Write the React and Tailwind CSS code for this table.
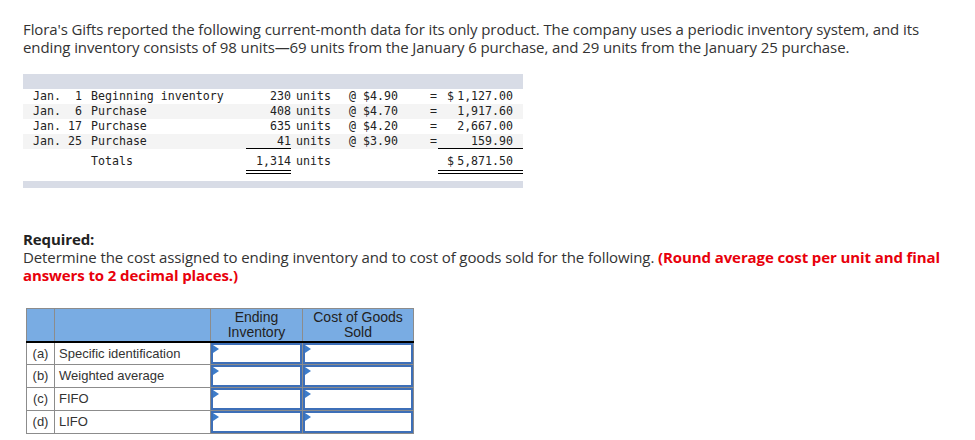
import React from 'react';

const rows = [
  { date: 'Jan.  1', desc: 'Beginning inventory', units: '230', price: '@ $4.90', amount: '1,127.00', dollar: true },
  { date: 'Jan.  6', desc: 'Purchase', units: '408', price: '@ $4.70', amount: '1,917.60' },
  { date: 'Jan. 17', desc: 'Purchase', units: '635', price: '@ $4.20', amount: '2,667.00' },
  { date: 'Jan. 25', desc: 'Purchase', units: '41', price: '@ $3.90', amount: '159.90' },
];

const methods = [
  { key: '(a)', label: 'Specific identification' },
  { key: '(b)', label: 'Weighted average' },
  { key: '(c)', label: 'FIFO' },
  { key: '(d)', label: 'LIFO' },
];

function DataRow({ row, index, last }) {
  const shade = index % 2 === 1 ? 'bg-[#f4f4f4]' : 'bg-white';
  return (
    <div className={`flex h-[15px] leading-[15px] ${shade}`}>
      <div className="w-[10px]" />
      <div className="w-[58px] whitespace-pre">{row.date}</div>
      <div className="w-[155px] whitespace-pre">{row.desc}</div>
      <div className={`w-[45px] text-right ${last ? 'border-b border-black' : ''}`}>{row.units}</div>
      <div className="w-[5px]" />
      <div className="w-[53px]">units</div>
      <div className="w-[81px] whitespace-pre">{row.price}</div>
      <div className="w-[8px]">=</div>
      <div className={`w-[85px] flex pr-[10px] ${last ? 'border-b border-black' : ''}`}>
        {row.dollar && <span className="ml-[9px]">$</span>}
        <span className="ml-auto">{row.amount}</span>
      </div>
    </div>
  );
}

function InputCell() {
  return (
    <td className="border border-[#8c8c8c] p-0 h-[23px]">
      <div className="relative h-full border-2 border-[#3d6fb8] bg-white">
        <span className="absolute left-0 top-0 w-0 h-0 border-y-[4px] border-y-transparent border-l-[6px] border-l-[#3d7cc9]" />
      </div>
    </td>
  );
}

export default function App() {
  return (
    <div className="w-[975px] h-[440px] overflow-hidden bg-white pl-[23px] pt-[20px] text-[#333] font-['Open_Sans',sans-serif]">
      <p className="text-[15px] leading-[18px] w-[935px] tracking-[-0.1px]">
        Flora's Gifts reported the following current-month data for its only product. The company uses a periodic inventory system, and its ending inventory consists of 98 units—69 units from the January 6 purchase, and 29 units from the January 25 purchase.
      </p>

      <div className="mt-[18px] w-[500px] font-['DejaVu_Sans_Mono',monospace] text-[11.6px] text-[#222]">
        <div className="h-[15px] bg-[#d8dce6]" />
        {rows.map((row, i) => (
          <DataRow key={row.date} row={row} index={i} last={i === rows.length - 1} />
        ))}
        <div className="flex h-[21px] leading-[15px] pt-[5px]">
          <div className="w-[68px]" />
          <div className="w-[155px]">Totals</div>
          <div className="w-[45px] text-right">1,314</div>
          <div className="w-[5px]" />
          <div className="w-[53px]">units</div>
          <div className="w-[89px]" />
          <div className="w-[85px] flex pr-[10px]">
            <span className="ml-[9px]">$</span>
            <span className="ml-auto">5,871.50</span>
          </div>
        </div>
        <div className="flex h-[4px]">
          <div className="w-[223px]" />
          <div className="w-[45px] border-t-4 border-double border-black" />
          <div className="w-[147px]" />
          <div className="w-[85px] border-t-4 border-double border-black" />
        </div>
        <div className="mt-[7px] h-[7px] bg-[#d8dce6]" />
      </div>

      <div className="mt-[42px] text-[15px] leading-[18px] tracking-[-0.1px]">
        <p className="font-bold text-[#222]">Required:</p>
        <p className="w-[935px]">
          Determine the cost assigned to ending inventory and to cost of goods sold for the following.{' '}
          <span className="font-bold text-[#e8000b]">(Round average cost per unit and final answers to 2 decimal places.)</span>
        </p>
      </div>

      <table className="mt-[24px] ml-[3px] border-collapse font-['Liberation_Sans',Arial,sans-serif] text-[13px] text-[#333]">
        <thead>
          <tr className="bg-[#79ace3] h-[33px]">
            <th className="w-[28px] border border-[#8c8c8c] border-b-2 border-b-black" />
            <th className="w-[156px] border border-[#8c8c8c] border-b-2 border-b-black" />
            <th className="w-[92px] border border-[#8c8c8c] border-b-2 border-b-black font-normal text-[14px] leading-[15px] text-[#222]">
              Ending<br />Inventory
            </th>
            <th className="w-[111px] border border-[#8c8c8c] border-b-2 border-b-black font-normal text-[14px] leading-[15px] text-[#222]">
              Cost of Goods<br />Sold
            </th>
          </tr>
        </thead>
        <tbody>
          {methods.map((m) => (
            <tr key={m.key} className="h-[23px]">
              <td className="border border-[#8c8c8c] text-center px-0">{m.key}</td>
              <td className="border border-[#8c8c8c] pl-[4px]">{m.label}</td>
              <InputCell />
              <InputCell />
            </tr>
          ))}
        </tbody>
      </table>
    </div>
  );
}
